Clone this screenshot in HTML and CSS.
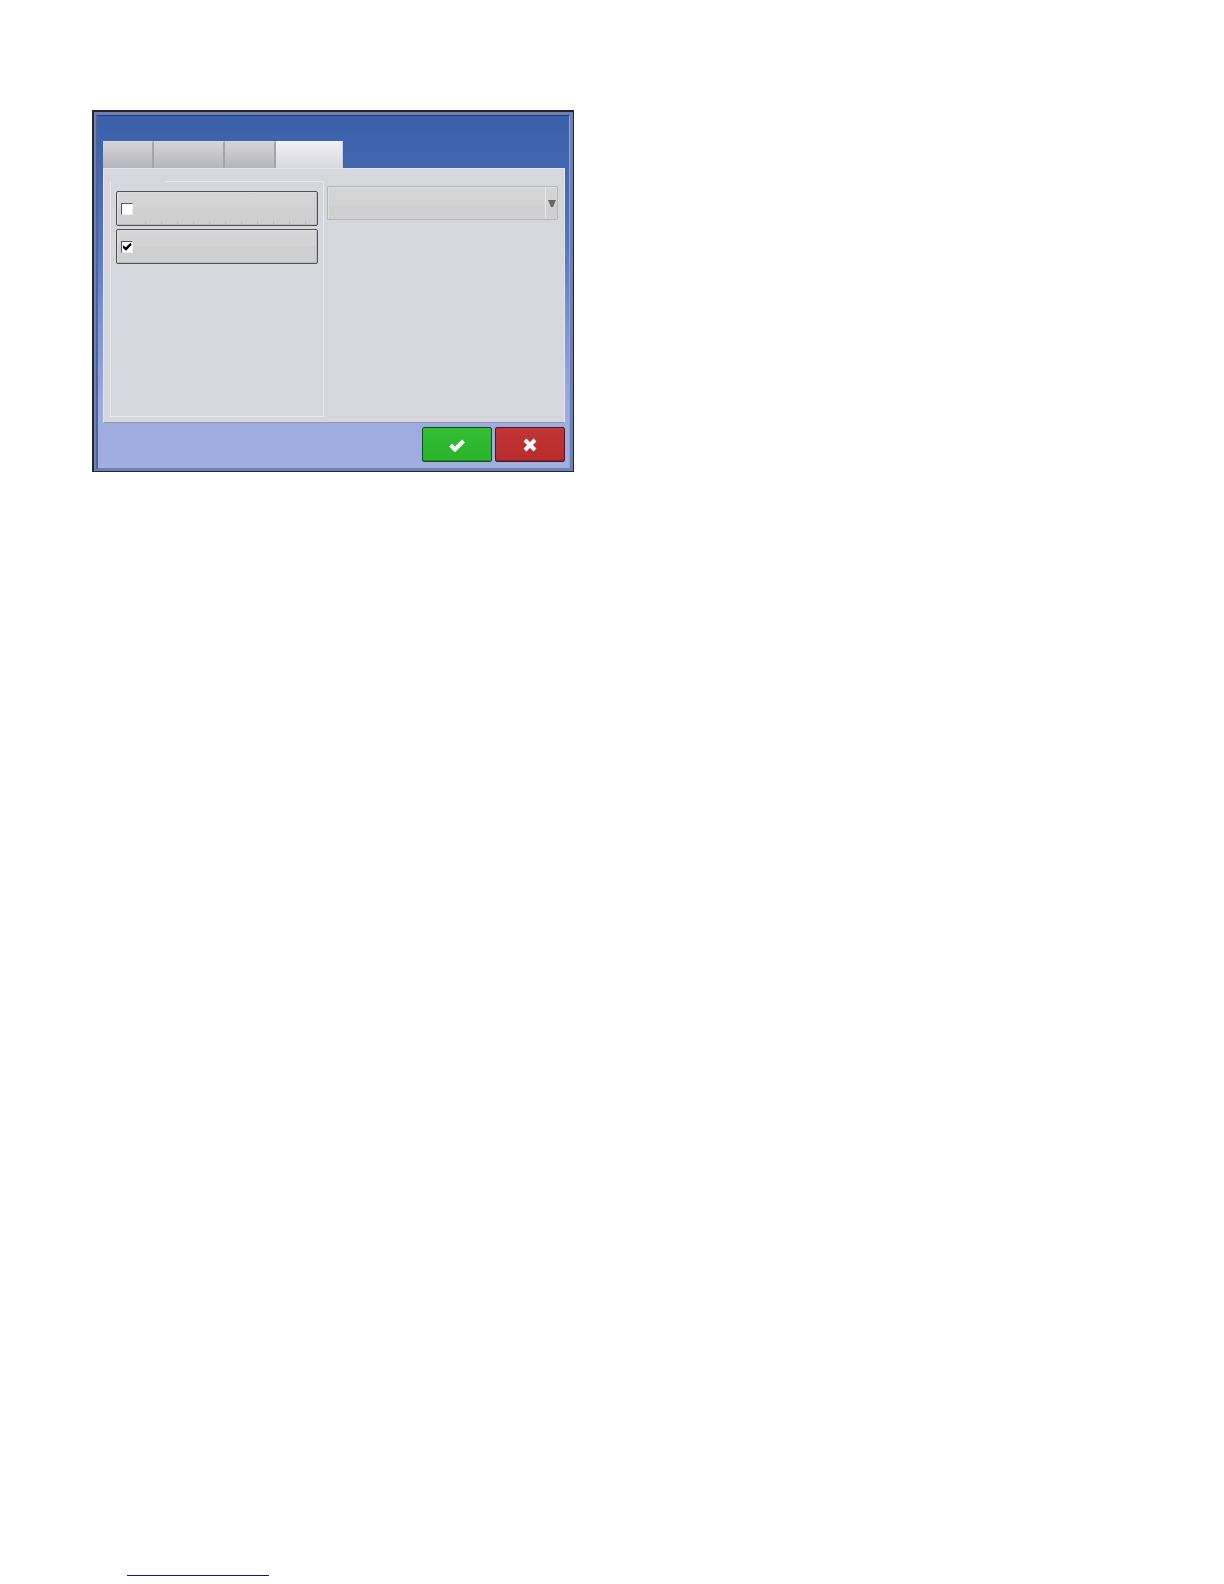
FILE: index.html
```html
<!DOCTYPE html>
<html lang="en">
<head>
    <meta charset="UTF-8">
    <title>Setup</title>
    <link rel="stylesheet" href="styles.css">
</head>
<body>
    <main class="dialog">
        <div class="window">
            <div class="tabs" role="tablist">
                <button class="tab" role="tab" aria-label="Tab 1"></button>
                <button class="tab tab-wide" role="tab" aria-label="Tab 2"></button>
                <button class="tab" role="tab" aria-label="Tab 3"></button>
                <button class="tab active" role="tab" aria-selected="true" aria-label="Tab 4"></button>
            </div>
            <div class="panel">
                <fieldset class="group">
                    <legend></legend>
                    <label class="option ticks">
                        <input type="checkbox" aria-label="Option 1">
                    </label>
                    <label class="option">
                        <input type="checkbox" aria-label="Option 2" checked>
                    </label>
                </fieldset>
                <div class="picker">
                    <select aria-label="Selection" disabled>
                        <option></option>
                    </select>
                    <span class="arrow">
                        <svg width="8" height="7" viewBox="0 0 8 7"><path d="M0 0h8L5 7H3z" fill="#666"/></svg>
                    </span>
                </div>
            </div>
            <div class="actions">
                <button class="ok" aria-label="OK">
                    <svg width="18" height="14" viewBox="0 0 18 14"><path d="M2.5 7l4.5 4.5L15.5 3" fill="none" stroke="#fff" stroke-width="4"/></svg>
                </button>
                <button class="cancel" aria-label="Cancel">
                    <svg width="14" height="14" viewBox="0 0 14 14"><path d="M2 2l10 10M12 2L2 12" fill="none" stroke="#fff" stroke-width="4"/></svg>
                </button>
            </div>
        </div>
    </main>
    <footer class="footer">
        <a href="#" class="link" aria-label="Website"></a>
    </footer>
</body>
</html>
```

FILE: styles.css
```css
* {
    box-sizing: border-box;
}
body {
    margin: 0;
    min-height: 100vh;
    background: #fff;
    font-family: "Liberation Sans", Arial, sans-serif;
    display: flex;
    flex-direction: column;
    padding: 110px 92px 8px;
}
.dialog {
    width: 100%;
    max-width: 482px;
    border: 2px solid #22252f;
    border-right-width: 1px;
    border-bottom-width: 1px;
    background: #6e7fb2;
    padding: 3px 3px 2px 2px;
}
.window {
    border-left: 2px solid #4a64a0;
    border-top: 1px solid #27396c;
    border-right: 1px solid #90a4dc;
    border-bottom: 1px solid #6f7fc0;
    background: linear-gradient(#3b60aa 0, #4266b0 50px, #5577c4 130px, #7b94d8 210px, #9cabdf 290px, #a0aee0);
    padding: 25px 4px 6px 5px;
}
.tabs {
    display: flex;
}
.tab {
    width: 51px;
    height: 27px;
    padding: 0;
    border: none;
    border-top: 1px solid #d8d9df;
    border-right: 2px solid #a4a5ab;
    background: linear-gradient(#d4d4d9, #c6c6ca 50%, #b5b5b9);
}
.tab-wide {
    width: 71px;
}
.active {
    width: 67px;
    border-top-color: #f3f3fa;
    border-right: 1px solid #c9cedc;
    background: linear-gradient(#f0f0f6, #d7d8de);
}
.panel {
    display: flex;
    align-items: flex-start;
    gap: 3px;
    min-height: 254px;
    padding: 12px 6px 5px;
    background: #d5d7dc;
    border: 1px solid #e4e6ec;
    border-bottom-color: #8f98ae;
}
.group {
    flex: 0 1 214px;
    min-width: 0;
    min-height: 236px;
    margin: 0;
    padding: 9px 5px;
    border: 1px solid #e8e9ec;
}
.group legend {
    width: 54px;
    height: 1px;
    margin-left: -5px;
    padding: 0;
}
.option {
    display: flex;
    align-items: center;
    height: 35px;
    margin-bottom: 3px;
    padding-left: 4px;
    border: 1px solid #505054;
    border-radius: 2px;
    background: linear-gradient(#d6d6d7, #d3d3d3 50%, #cfcfcf 50%, #d0d0d0);
    box-shadow: inset 1px 1px #dedede, inset -1px -1px #bbb;
}
.ticks {
    background: repeating-linear-gradient(90deg, #b5b5b5 0 1px, transparent 1px 16px) 28px 30px / 176px 3px no-repeat,
        linear-gradient(#d6d6d7, #d3d3d3 50%, #cfcfcf 50%, #d0d0d0);
}
.option input {
    appearance: none;
    width: 12px;
    height: 12px;
    margin: 0;
    background: #fff;
    border: 1px solid #eee;
    border-top-color: #555;
    border-left-color: #555;
}
.option input:checked::before {
    content: "";
    display: block;
    width: 10px;
    height: 10px;
    background: #000;
    clip-path: polygon(10% 35%, 38% 58%, 88% 10%, 95% 35%, 40% 92%, 10% 65%);
}
.picker {
    flex: 1;
    display: grid;
    margin-top: 5px;
}
.picker select,
.arrow {
    grid-area: 1 / 1;
}
.picker select {
    appearance: none;
    width: 100%;
    height: 34px;
    border: 1px solid #b5b6b7;
    border-radius: 1px;
    background: linear-gradient(#d5d5d6, #d3d3d3 55%, #cfcfcf 55%, #d0d0d0);
    box-shadow: inset 1px 1px #dedede;
    opacity: 1;
}
.arrow {
    justify-self: end;
    display: flex;
    align-items: center;
    justify-content: center;
    width: 12px;
    margin: 2px 1px;
    border-left: 1px solid #e8e8e8;
    pointer-events: none;
}
.actions {
    display: flex;
    justify-content: flex-end;
    gap: 3px;
    padding-top: 4px;
}
.actions button {
    display: flex;
    align-items: center;
    justify-content: center;
    width: 70px;
    height: 35px;
    padding: 0;
    border-radius: 2px;
}
.ok {
    border: 1px solid #174a24;
    background: linear-gradient(#35bd36, #2fb82f 50%, #29b52a);
    box-shadow: inset 0 -1px #1f8724;
}
.cancel {
    border: 1px solid #4c1827;
    background: linear-gradient(#c03535, #bd3030 50%, #b62d2e);
    box-shadow: inset 0 -1px #8c2228;
}
.footer {
    display: flex;
    margin-top: auto;
    padding-left: 35px;
}
.link {
    width: 142px;
    height: 16px;
    border-bottom: 1px solid #151590;
}
```
